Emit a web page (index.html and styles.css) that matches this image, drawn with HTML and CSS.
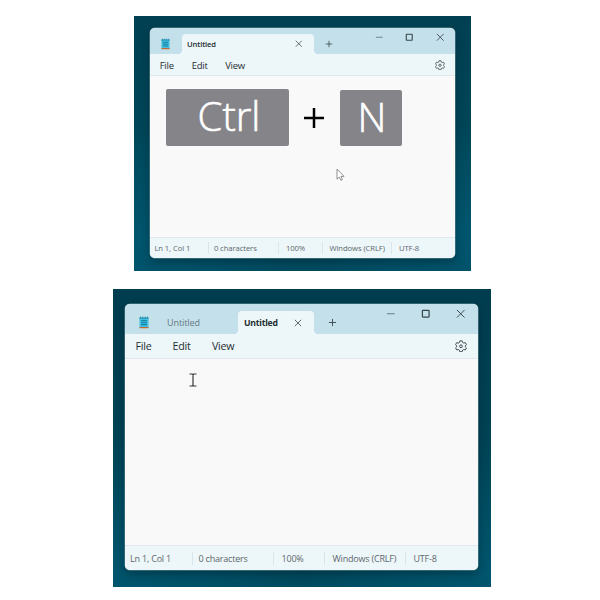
FILE: index.html
```
<!DOCTYPE html>
<html lang="en">
<head>
<meta charset="utf-8">
<title>Notepad tabs</title>
<link rel="stylesheet" href="styles.css">
</head>
<body>
<svg class="defs" width="0" height="0" aria-hidden="true">
  <symbol id="notepad" viewBox="0 0 10 13">
    <rect x=".5" y="1.5" width="9" height="10" fill="#43c0e2"/>
    <path d="M.5 1.5h9v1.3h-9z" fill="#2b9cbe"/>
    <path d="M1.5 .5v2M3.8 .5v2M6.2 .5v2M8.5 .5v2" stroke="#287f99" stroke-width=".7"/>
    <path d="M2 4.7h6M2 6.7h6M2 8.7h6" stroke="#087394" stroke-width=".9"/>
    <path d="M.5 11h9v1.2h-9z" fill="#bd6b39"/>
  </symbol>
  <symbol id="close" viewBox="0 0 10 10"><path d="M1 1l8 8M9 1L1 9"/></symbol>
  <symbol id="plus" viewBox="0 0 10 10"><path d="M5 1v8M1 5h8"/></symbol>
  <symbol id="minimize" viewBox="0 0 10 10"><path d="M1 5h8"/></symbol>
  <symbol id="maximize" viewBox="0 0 10 10"><rect x="1.5" y="1.5" width="7" height="7" rx=".5"/></symbol>
  <symbol id="gear" viewBox="0 0 20 20">
    <path d="M8 1.5h4l.7 2.700 1.700 1 2.700-.8 2 3.400-2 2v1.400l2 2-2 3.400-2.700-.8-1.700 1-.7 2.700H8l-.7-2.700-1.700-1-2.700.8-2-3.400 2-2V9.800l-2-2 2-3.400 2.700.8 1.700-1z" stroke-linejoin="round"/>
    <circle cx="10" cy="10.500" r="2.300"/>
  </symbol>
</svg>
<main>
  <section class="desktop first">
    <div class="window">
      <header class="titlebar">
        <svg class="app"><use href="#notepad"/></svg>
        <div class="tab active"><span>Untitled</span><svg class="tab-close"><use href="#close"/></svg></div>
        <svg class="new"><use href="#plus"/></svg>
        <div class="controls"><svg class="min"><use href="#minimize"/></svg><svg class="max"><use href="#maximize"/></svg><svg><use href="#close"/></svg></div>
      </header>
      <nav><span>File</span><span>Edit</span><span>View</span><svg class="gear"><use href="#gear"/></svg></nav>
      <div class="editor">
        <div class="keys"><kbd class="ctrl">Ctrl</kbd><svg class="join" viewBox="0 0 20 20"><path d="M10 0v20M0 10h20"/></svg><kbd class="letter">N</kbd></div>
        <svg class="pointer" viewBox="0 0 9 14"><path d="M1 1v10.200l2.300-2.100 1.600 3.300 1.500-.8-1.500-3.200h3.100z"/></svg>
      </div>
      <footer><span>Ln 1, Col 1</span><span>0 characters</span><span>100%</span><span>Windows (CRLF)</span><span>UTF-8</span></footer>
    </div>
  </section>
  <section class="desktop second">
    <div class="window">
      <header class="titlebar">
        <svg class="app"><use href="#notepad"/></svg>
        <div class="tab inactive"><span>Untitled</span></div>
        <div class="tab active"><span>Untitled</span><svg class="tab-close"><use href="#close"/></svg></div>
        <svg class="new"><use href="#plus"/></svg>
        <div class="controls"><svg class="min"><use href="#minimize"/></svg><svg class="max"><use href="#maximize"/></svg><svg><use href="#close"/></svg></div>
      </header>
      <nav><span>File</span><span>Edit</span><span>View</span><svg class="gear"><use href="#gear"/></svg></nav>
      <div class="editor">
        <svg class="ibeam" viewBox="0 0 8 14"><path d="M.5 1h2.700l.8.700.8-.7h2.700M4 1.700v10.600M.5 13h2.700l.8-.7.8.700h2.700"/></svg>
      </div>
      <footer><span>Ln 1, Col 1</span><span>0 characters</span><span>100%</span><span>Windows (CRLF)</span><span>UTF-8</span></footer>
    </div>
  </section>
</main>
</body>
</html>
```
FILE: styles.css
```
* { box-sizing: border-box; }
body { margin: 0; background: #fff; font-family: "Open Sans", "Noto Sans", sans-serif; color: #252e32; }
.defs { display: block; height: 0; }
main { height: 600px; padding-top: 16px; overflow: hidden; }
svg { display: block; fill: none; stroke: #39464c; stroke-width: 1; flex: none; }
.app { stroke: none; }
span { white-space: nowrap; }

.desktop { overflow: hidden; }
.first { width: 337px; height: 255px; margin-left: 134px; padding: 12px 15.600px 13px 16.400px; background: radial-gradient(ellipse at 0 88%, rgba(0, 100, 128, .45), transparent 35%), radial-gradient(ellipse at 100% 85%, rgba(0, 100, 128, .45), transparent 35%), linear-gradient(180deg, #004052, #00485b 60%, #004b60); }
.second { width: 378px; height: 298px; margin: 18px 0 0 113px; padding: 14.500px 13px 17.500px 12px; background: radial-gradient(ellipse at 0 95%, rgba(0, 100, 128, .45), transparent 35%), radial-gradient(ellipse at 100% 95%, rgba(0, 100, 128, .45), transparent 35%), linear-gradient(180deg, #003d4e, #004456 60%, #004b5f); }
.window { height: 100%; display: flex; flex-direction: column; border-radius: 5px; overflow: hidden; background: #f9f9f9; box-shadow: 0 0 0 .5px #668d98, 0 4px 10px rgba(0, 22, 34, .4); }
.titlebar { display: flex; align-items: flex-end; background: #c4e1eb; flex: none; }
.tab { display: flex; align-items: center; position: relative; }
.active { background: #edf6f9; border-radius: 4px 4px 0 0; font-weight: 700; }
.active::before, .active::after { content: ""; position: absolute; bottom: 0; width: 3px; height: 3px; }
.active::before { left: -3px; background: radial-gradient(circle at 0 0, transparent 2.500px, #edf6f9 3px); }
.active::after { right: -3px; background: radial-gradient(circle at 100% 0, transparent 2.500px, #edf6f9 3px); }
.inactive { color: #65777e; }
.controls { display: flex; align-self: flex-start; margin-left: auto; }
.controls .min { stroke: #5f767f; }
.controls .max { stroke-width: 1.300; }
nav { display: flex; align-items: center; background: #edf6f9; border-bottom: 1px solid #dfe9ed; flex: none; }
.gear { margin-left: auto; stroke-width: 1.600; }
.editor { flex: 1; min-height: 0; }
footer { display: grid; align-items: center; background: #edf6f9; border-top: 1px solid #e0eaee; color: #5d686d; flex: none; }
footer span + span { border-left: 1px solid #dae5e9; }

.first .titlebar { height: 26px; }
.first .app { width: 9px; height: 12px; margin: 0 16.600px 4px 11px; }
.first .active { width: 132px; height: 20px; margin-left: -5px; padding-left: 5px; font-size: 7.600px; font-weight: 600; letter-spacing: -.1px; }
.first .tab-close { width: 7.500px; height: 7.500px; margin-left: auto; margin-right: 11px; }
.first .new { width: 8px; height: 8px; margin: 0 0 6px 11.500px; }
.first .controls { gap: 22px; padding: 5px 11px 0 0; }
.first .controls svg { width: 8.500px; height: 8.500px; }
.first nav { height: 22px; padding: 1px 10px 0 9.300px; font-size: 9.500px; letter-spacing: -.25px; }
.first nav span:nth-child(1) { width: 32px; }
.first nav span:nth-child(2) { width: 33.500px; }
.first .gear { width: 10px; height: 10px; }
.first footer { height: 21px; grid-template-columns: 57.500px 70.500px 43.500px 69.500px 1fr; font-size: 7.700px; line-height: 12px; letter-spacing: -.1px; }
.first footer span { padding-left: 5px; }
.first footer span:first-child { padding-left: 4px; }
.first footer span:nth-child(n+3) { padding-left: 6.600px; }

.keys { display: flex; align-items: flex-end; height: 70px; padding-left: 15.600px; }
kbd { display: flex; align-items: center; justify-content: center; background: #858489; color: #fff; border-radius: 2px; font: 300 40px/1 "Open Sans", sans-serif; -webkit-text-stroke: .6px #fff; }
.ctrl { width: 123px; height: 57px; padding: 0 0 3px 3px; }
.letter { width: 62px; height: 56px; padding: 0 0 3px 2px; }
.join { width: 20px; height: 20px; margin: 0 16px 18px 15px; stroke: #000; stroke-width: 2.500; }
.pointer { width: 9px; height: 14px; margin: 22px 0 0 186px; stroke: #777; stroke-width: .8; fill: #fff; }

.second .titlebar { height: 30.500px; }
.second .app { width: 10px; height: 13px; margin: 0 18.500px 5.500px 13.500px; }
.second .inactive { width: 71px; height: 23px; font-size: 9px; letter-spacing: -.1px; }
.second .active { width: 76px; height: 23px; padding-left: 6px; font-size: 8.700px; letter-spacing: -.25px; }
.second .tab-close { width: 8px; height: 8px; margin-left: auto; margin-right: 12px; }
.second .new { width: 9px; height: 9px; margin: 0 0 7px 14px; }
.second .controls { gap: 25.500px; padding: 5.500px 13px 0 0; }
.second .controls svg { width: 9.500px; height: 9.500px; }
.second nav { height: 25px; padding: 0 11px 0 10.500px; font-size: 10.700px; letter-spacing: -.25px; }
.second nav span:nth-child(1) { width: 37px; }
.second nav span:nth-child(2) { width: 39.500px; }
.second .gear { width: 12px; height: 12px; }
.second footer { height: 24.500px; grid-template-columns: 66.500px 81px 51px 81px 1fr; font-size: 9px; line-height: 13px; letter-spacing: -.2px; padding-top: .5px; }
.second footer span { padding-left: 6px; }
.second footer span:first-child { padding-left: 5px; }
.second footer span:nth-child(n+3) { padding-left: 8px; }
.ibeam { width: 8px; height: 14px; margin: 14px 0 0 63.500px; stroke: #34383a; stroke-width: 1.200; }
```
